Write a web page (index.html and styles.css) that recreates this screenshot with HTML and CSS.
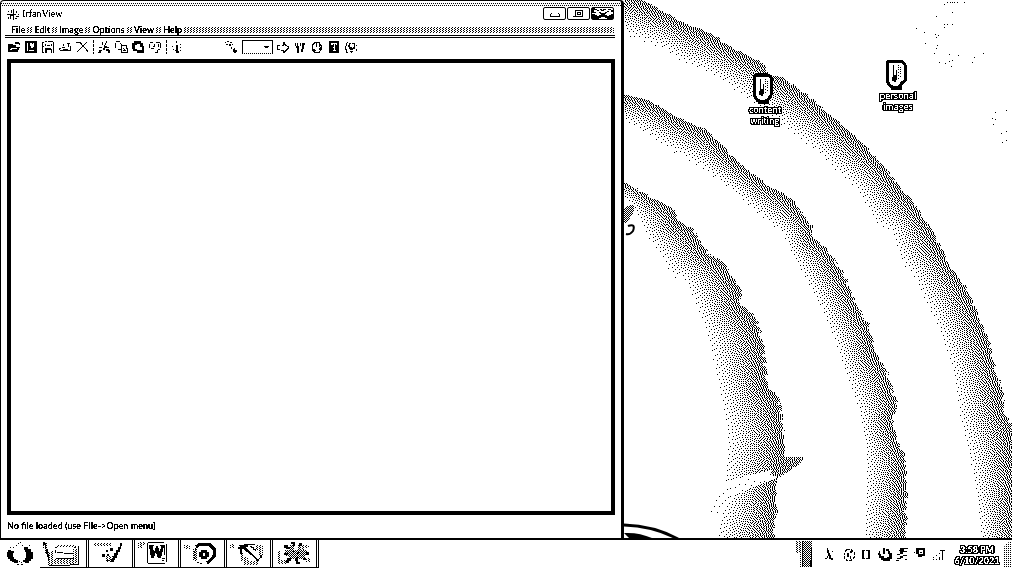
FILE: index.html
```html
<!DOCTYPE html>
<html lang="en">
<head>
<meta charset="utf-8">
<title>IrfanView</title>
<link rel="stylesheet" href="styles.css">
</head>
<body>
<svg class="defs" aria-hidden="true">
  <defs>
    <pattern id="dots" width="3" height="2" patternUnits="userSpaceOnUse"><path d="M0 0h1v1h-1zM2 1h1v1h-1z"/></pattern>
    <pattern id="check" width="2" height="2" patternUnits="userSpaceOnUse"><path d="M0 0h1v1h-1zM1 1h1v1h-1z"/></pattern>
  </defs>
  <filter id="onebit" color-interpolation-filters="sRGB" x="0" y="0" width="100%" height="100%">
    <feComponentTransfer>
      <feFuncR type="discrete" tableValues="0 1"/><feFuncG type="discrete" tableValues="0 1"/><feFuncB type="discrete" tableValues="0 1"/>
      <feFuncA type="discrete" tableValues="0 0 1 1 1"/>
    </feComponentTransfer>
  </filter>
</svg>
<main class="desktop">
  <section class="window" aria-label="IrfanView">
    <header class="titlebar">
      <svg class="app-icon" viewBox="0 0 13 12"><path d="M4 1h1v3h-1zM6 0h1v5h2v1h-2v5h-1v-4h-2v3h-1v-4h-2v-1h5zM1 2h1v1h-1zM0 5h1v1h-1zM1 8h1v2h-1zM9 2h1v2h-1zM9 7h3v1h-3zM11 5h1v1h-1zM8 9h2v1h-2z"/></svg>
      <h1 class="title">IrfanView</h1>
      <div class="controls">
        <button class="control" aria-label="Minimize"><svg viewBox="0 0 21 11"><path fill="none" stroke="#000" d="M6.500 6v2.500h9v-2.500M7 5.500h1M14 5.500h1"/></svg></button>
        <button class="control" aria-label="Restore"><svg viewBox="0 0 21 11"><path fill="none" stroke="#000" d="M7.500 2.500h7v6h-7zM9.500 4.500h3v2h-3zM5 8.500h2"/></svg></button>
        <button class="control" aria-label="Close"><svg viewBox="0 0 21 11"><path d="M0 0h3v1h2v1h-3v2h2v1h-4zM5 2h2v1h-2zM8 1h2v1h1v-1h3v1h-2v1h-3v-1h-1zM16 1h3v1h-3zM15 3h2v1h-2zM7 4h2v1h4v-1h2v1h-1v1h-6v-1h-1zM0 6h3v1h2v1h2v-1h2v-1h4v1h2v1h2v-1h2v-1h2v5h-6v-1h-2v-1h-4v1h-2v1h-7zM19 2h2v2h-2z"/></svg></button>
      </div>
    </header>
    <nav class="menubar">
      <button>File</button><i></i><button>Edit</button><i></i><button>Image</button><i></i><button>Options</button><i></i><button>View</button><i></i><button>Help</button><i class="rest"></i>
    </nav>
    <div class="toolbar">
      <button aria-label="Open"><svg viewBox="0 0 13 13"><path d="M0 3h5v1h3v2h4v1h-1v2h-1v2h-10zM7 1h4v1h1v2h-1v-1h-4zM2 8v1h2v-1h5v-1h-6v1z" fill-rule="evenodd"/></svg></button>
      <button aria-label="Slideshow"><svg viewBox="0 0 13 13"><path d="M0 0h12v12h-12zM2 2v8h1v-8zM5 2v3h1v2h2v-1h1v-4h-1v1h-1v-1zM4 9v1h5v-1z" fill-rule="evenodd"/></svg></button>
      <button aria-label="Save"><svg viewBox="0 0 13 13"><path d="M0 1h2v1h-1v3h1v1h-1v5h1v1h-2zM3 0h2v1h-2zM6 0h5v1h-5zM11 1h1v11h-1zM3 3h1v2h-1zM5 4h3v1h-3zM9 3h1v2h-1zM3 7h6v1h1v4h-1v-3h-4v3h-2z"/></svg></button>
      <button aria-label="Print"><svg viewBox="0 0 13 13"><path d="M4 3h1v2h-1zM8 2h3v1h-1v3h-1v-3h-1zM0 7h2v1h-1v1h3v-1h5v1h2v-4h1v5h-11v-1h-1zM3 6h3v1h-3z"/></svg></button>
      <button aria-label="Delete"><svg viewBox="0 0 13 13"><path fill="none" stroke="#000" d="M0 1.500h4l8 9M11 1l-4 4l-6 6"/></svg></button>
      <span class="sep"></span>
      <button aria-label="Cut"><svg viewBox="0 0 13 13"><path d="M4 1h1v3h-1zM8 0h1v2h-1v2h-1v1h2v1h2v1h-4v2h-2v-2h1v-3h1v-2h1zM1 6h3v1h-3zM1 9h3v1h-1v2h-3v-1h1zM8 8h3v1h1v3h-2v-2h-2z"/></svg></button>
      <button aria-label="Copy"><svg viewBox="0 0 13 13"><path fill="none" stroke="#000" d="M1 .5h4M.5 2v5M3 8.500h3M5 2l3 3M6.500 4v8M8 4.500h3l1 3v4h-6M8 7l3 3M8 9.500h3"/></svg></button>
      <button aria-label="Paste"><svg viewBox="0 0 13 13"><path fill-rule="evenodd" d="M2 0h7v2h2v3h1v7h-7v-2h-4v-2h-1v-6h2zM5 3v1h-2v4h2v1h5v-3h-2v-3z"/></svg></button>
      <button aria-label="Undo"><svg viewBox="0 0 13 13"><path fill="none" stroke="#000" d="M1 1.500h3M.5 3v4M2 7.500h3M5.500 3v3M7 1.500h4M11.500 2v5M11 8.500h-2M8 9v3M6 11.500h2M4 5h2M9.500 3v3"/></svg></button>
      <span class="sep"></span>
      <button aria-label="Information"><svg viewBox="0 0 13 13"><path d="M5 0h1v2h-1zM5 4h2v6h1v2h-3v-2h-1v-1h1zM1 5h1v1h-1zM2 8h1v1h-1zM9 3h1v1h-1zM9 6h1v1h-1zM9 9h1v1h-1z"/></svg></button>
      <span class="gap"></span>
      <button aria-label="Zoom"><svg viewBox="0 0 13 13"><path d="M0 1h1v1h-1zM2 0h2v1h-2zM5 1h2v1h-2zM1 3h2v1h-2zM4 3h2v2h-2zM7 3h1v1h-1zM6 6h1v2h-1zM8 8h1v-1h1v2h2v2h-1v1h-2v-1h-1z"/></svg></button>
      <label class="zoom"><select aria-label="Zoom percent"><option></option></select><svg viewBox="0 0 5 3"><path d="M0 0h5v1h-1v1h-3v-1h-1z"/></svg></label>
      <button aria-label="Next"><svg viewBox="0 0 13 13"><path d="M0 4h3v1h-2v3h2v1h-3zM4 4h2v-3h2v2h1v1h1v1h2v3h-1v1h-1v1h-1v1h-1v1h-2v-2h-2v-1h3v1h1v-1h1v-1h1v-1h1v-1h-1v-1h-2v-1h-1v1h-2z"/></svg></button>
      <button aria-label="Tools"><svg viewBox="0 0 13 13"><path d="M1 2h1v3h1v-3h1v3h1v7h-2v-5h-1v-2h-1zM6 2h1v3h-1zM8 2h3v2h-1v4h-1v3h-2v-3h1z"/></svg></button>
      <button aria-label="Rotate"><svg viewBox="0 0 13 13"><path fill="none" stroke="#000" d="M4 1.500h4l2 3v4l-2 3h-4l-3-3v-4zM5.500 1v5M2 8l3 2M8 9l2-3M8.500 3v3"/></svg></button>
      <button aria-label="Settings"><svg viewBox="0 0 13 13"><path fill-rule="evenodd" d="M1 0h10v12h-10zM3 2v2h2v-1h1v3h-1v1h1v2h-1v1h3v-1h-1v-6h1v1h1v-2z"/></svg></button>
      <button aria-label="About"><svg viewBox="0 0 13 13"><path d="M2 1h1v1h-1v3h-1v3h1v3h1v1h-2v-3h-1v-4h1v-3h1zM4 2h2v1h-1v3h2v1h1v-1h1v-3h-2v-1h3v6h-2v1h-3v-1h-1v-2h-1zM5 10h3v1h-1v1h-1v-1h-1zM11 4h1v1h-1zM11 8h1v2h-1z"/></svg></button>
    </div>
    <div class="viewer"></div>
    <footer class="status">No file loaded (use File-&gt;Open menu)</footer>
  </section>
  <section class="wallpaper" aria-label="Desktop">
    <canvas id="rings"></canvas>
    <a class="shortcut content" href="#content"><svg viewBox="0 0 29 31"><path class="rim" d="M3 3l3-1h11l3 2v18l-3 5l-5 2l-6-2l-3-5z"/><path d="M9 6h1v10h2v-5h1v10h-1v2h-2v-1h-2v-4h1zM14 6h1v1h-1zM16 8h1v1h-1zM14 8h1v1h-1zM16 10h1v1h-1zM14 10h1v1h-1zM16 12h1v1h-1zM14 13h1v1h-1zM16 14h1v1h-1zM14 16h1v1h-1zM16 17h1v1h-1zM14 19h1v1h-1zM7 27h11v4h-11z"/></svg><span>content<br>writing</span></a>
    <a class="shortcut personal" href="#personal"><svg viewBox="0 0 29 31"><path class="rim" d="M3 3l3-1l13 1l2 3v10l1 5l-4 3l-3 4l-4 1l-5-2l-3-5z"/><path d="M9 6h1v10h2v-5h1v10h-1v2h-2v-1h-2v-4h1zM14 6h1v1h-1zM16 8h1v1h-1zM14 8h1v1h-1zM16 10h1v1h-1zM14 10h1v1h-1zM16 12h1v1h-1zM14 13h1v1h-1zM16 14h1v1h-1zM14 16h1v1h-1zM16 17h1v1h-1zM14 19h1v1h-1zM7 27h11v4h-11z"/></svg><span>personal<br>images</span></a>
  </section>
</main>
<footer class="taskbar">
  <button class="start" aria-label="Start"><svg viewBox="0 0 28 24"><path d="M2 8h3v1h3v2h-1v4h1v2h2v1h2v3h-4v-1h-2v-1h-2v-2h-2v-2h-1v-5h1zM18 5h4v2h3v3h2v7h-2v2h-2v2h-4v-1h-2v-2h2v-2h1v-6h-1v-2h-1zM12 1h1v1h-1zM14 0h1v1h-1zM10 3h1v1h-1zM16 3h1v1h-1zM4 5h1v1h-1zM7 5h1v1h-1zM23 3h1v1h-1zM13 19h1v1h-1zM15 20h1v1h-1zM11 22h2v1h-2zM15 22h2v1h-2z"/></svg></button>
  <button class="task folder" aria-label="Explorer"><svg viewBox="0 0 38 26"><path fill="url(#dots)" d="M0 2h5v9h2v14h-3v-12h-3zM13 4h20v2h-20zM7 10h3v14h-3zM10 18h22v5h-22zM30 8h4v14h-4z"/><path d="M0 1h2v1h1v6h-1v-4h-2zM3 8h2v5h1v6h-1v-3h-1v-4h-1zM35 5h1v19h-9v-1h8zM7 24h20v1h-20zM12 9h1v3h-1zM14 11h6v1h-6zM21 12h9v1h-9zM13 17h18v1h-18zM31 6h2v1h-2zM12 6h2v1h-2z"/></svg></button>
  <button class="task" aria-label="Paint"><svg viewBox="0 0 38 26"><path fill="url(#dots)" d="M1 2h18v3h-18zM14 15h8v6h-8z"/><path d="M28 2h2v3h-1v3h-1v3h-2v3h-1v3h-2v2h-1v2h-3v-3h2v-3h1v-3h2v-3h2v-3h2zM18 7h3v3h-3zM14 9h2v2h-2zM10 13h3v3h-3zM15 13h2v2h-2zM14 19h3v1h-3z"/></svg></button>
  <button class="task" aria-label="Word"><svg viewBox="0 0 38 26"><path fill="url(#dots)" d="M0 1h7v3h-3v3h-4z"/><path fill="none" stroke="#000" d="M9.500 2v20M10 1.500h16M28.500 3v18M10 22.500h17"/><path d="M12 4h4v1h-1l1 7l2-7h2l2 7l1-7h-1v-1h5v1h-1l-3 12h-3l-2-6l-2 6h-3l-2-12h-1zM24 17h3v1h-3zM24 19h2v1h-2zM26 5h1v9h-1z"/></svg></button>
  <button class="task" aria-label="Media"><svg viewBox="0 0 38 26"><path fill="url(#dots)" d="M0 4h6v4h-6zM9 7h4v13h-4z"/><path fill="none" stroke="#000" stroke-width="3" d="M12 6l4-3h9l5 5v7l-3 4l-4 3"/><path fill="none" stroke="#000" stroke-dasharray="2 1" d="M13 5l-3 6v6l3 4l6 2"/><path fill-rule="evenodd" d="M17 9h6v2h2v5h-2v2h-6v-2h-2v-5h2zM19 12v3h2v-3z"/></svg></button>
  <button class="task" aria-label="Browser"><svg viewBox="0 0 38 26"><path fill="url(#dots)" d="M0 3h5v4h-5zM10 12h3v4h5v4h10v4h-14v-4h-4zM26 4h7v11h-4v-6h-3z"/><path d="M9 4h5v-1h11v1h-7v2h-3v2h-3v5h-2v-5h-2v-2h2zM14 6h1l13 12h-2l-14-11zM30 14h2v3h-3v3h-3v-2h4zM20 5h2v1h2v2h2v2h-1v-1h-2v-2h-2v-1h-1z"/></svg></button>
  <button class="task" aria-label="IrfanView"><svg viewBox="0 0 38 26"><path fill="url(#dots)" d="M2 10h3v9h5v4h-8zM24 4h9v3h-4v2h-3zM30 17h4v4h-4z"/><path fill="url(#check)" d="M9 9h22v5h-2v4h-16v-3h-4zM14 4h4v5h-4zM22 4h3v5h-3z"/><path d="M15 1h4v4h-2v-2h-2zM8 4h4v2h2v2h-4v-1h-2zM23 2h3v3h-3zM8 12h4v2h-4zM30 11h3v3h-4v-1h1zM11 17h4v3h-2v2h-3v-3h1zM20 16h2v5h2v2h-4v-3h-1zM27 17h3v2h-3zM17 9h1v2h-1zM21 11h2v2h-2z"/></svg></button>
  <div class="tray">
    <svg class="fade" viewBox="0 0 19 27"><path fill="url(#dots)" d="M1 1h8v26h-3v-14h-5z"/><path fill="url(#check)" d="M8 1h10v26h-10z"/><path d="M17 7h1v20h-1zM16 20h1v7h-1z"/></svg>
    <button aria-label="Pointer"><svg viewBox="0 0 14 15"><path d="M3 1h1v2h1v3h1v2h1v3h2v2h-2v-1h-2v-3h-1v-3h-1zM3 9h1v2h-1zM1 11h2v1h-2zM8 4h1v1h-1z"/></svg></button>
    <button aria-label="Sync"><svg viewBox="0 0 14 15"><path fill="none" stroke="#000" stroke-dasharray="3 1" d="M5 2.500h4l3 3v5l-3 3h-4l-3-3v-5z"/><path d="M5 6h2v4h-2zM8 4h2v2h-2zM8 9h1v3h-1z"/></svg></button>
    <button aria-label="Display"><svg viewBox="0 0 14 15"><path fill-rule="evenodd" d="M2 3h3v1h-1v7h1v1h-3zM6 3h4v9h-4v-1h2v-7h-2z"/></svg></button>
    <button aria-label="Update"><svg viewBox="0 0 14 15"><path d="M1 4h1v3h1v2h3v2h3v-1h2v-3h-1v-3h2v2h2v6h-2v2h-7v-1h-2v-2h-2v-3h-1zM5 1h2v6h-2zM8 2h3v2h-3z"/></svg></button>
    <button aria-label="Devices"><svg viewBox="0 0 14 15"><path d="M4 1h8v1h-4v2h3v1h-4v2h-3v-3h-1v-1h1zM1 7h3v1h-3zM7 8h4v1h-4v2h-2v1h-4v-1h3v-2h3zM9 12h2v1h-2zM0 13h3v1h-3z"/></svg></button>
    <button aria-label="Network"><svg viewBox="0 0 14 15"><path fill-rule="evenodd" d="M2 1h9v8h-3v1h-4v-3h-2zM5 3v4h4v-4zM0 5h1v1h-1zM6 5h2v1h-2z"/></svg></button>
    <button aria-label="Signal"><svg viewBox="0 0 14 15"><path d="M8 3h5v1h-2v9h-1v-9h-2zM7 6h1v1h-1zM7 10h1v3h-1zM4 8h1v1h-1zM1 10h1v1h-1zM1 12h1v1h-1zM4 12h1v1h-1z"/></svg></button>
    <time class="clock">3:58 PM<br>6/10/2021</time>
    <button class="show" aria-label="Show desktop"></button>
  </div>
</footer>
<script src="rings.js"></script>
</body>
</html>
```

FILE: styles.css
```css
* { box-sizing: border-box; }
body {
  margin: 0;
  height: 100vh;
  display: flex;
  flex-direction: column;
  overflow: hidden;
  background: #fff;
  color: #000;
  font-family: Lato, "Open Sans", sans-serif;
  font-size: 9px;
  font-weight: 700;
  line-height: 12px;
}
button {
  margin: 0;
  padding: 0;
  border: 0;
  background: none;
  color: inherit;
  font: inherit;
}
svg { display: block; shape-rendering: crispEdges; }
.defs { position: absolute; width: 0; height: 0; }

.desktop {
  flex: 1;
  min-height: 0;
  display: grid;
  grid-template-columns: 156fr 97fr;
  border-bottom: 2px solid #000;
}
.window {
  display: flex;
  flex-direction: column;
  border: 1px solid #000;
  border-width: 1px 3px 0 1px;
  border-top-left-radius: 4px;
  border-top-right-radius: 4px;
  min-width: 0;
}
.titlebar {
  display: flex;
  align-items: flex-start;
  height: 24px;
  padding: 6px 7px 0 6px;
  background: conic-gradient(from 0deg at 1px 1px, transparent 75%, #000 0) 4px 2px / 2px 2px repeat-x,
              conic-gradient(from 0deg at 1px 1px, transparent 75%, #000 0) 5px 4px / 2px 2px repeat-x;
}
.app-icon { width: 13px; height: 12px; margin-top: 2px; }
.title {
  flex: 1;
  margin: 0;
  padding-left: 2px;
  font: 400 10px/14px "Liberation Serif", serif;
  filter: url(#onebit);
}
.controls { display: flex; gap: 1px; }
.control { width: 23px; height: 13px; border: 1px solid #000; border-radius: 2px; background: #fff; }
.control svg { width: 21px; height: 11px; }

.menubar {
  display: flex;
  align-items: center;
  height: 10px;
  margin: 0 6px 0 4px;
  padding-left: 6px;
}
.menubar button { filter: url(#onebit); }
.menubar i {
  width: 9px;
  height: 6px;
  padding: 0 1px;
  background: conic-gradient(from 0deg at 1px 1px, transparent 75%, #000 0) 3px 0 / 3px 2px,
              conic-gradient(from 0deg at 1px 1px, transparent 75%, #000 0) 2px 1px / 3px 2px;
  background-clip: content-box;
}
.menubar .rest { flex: 1; }

.toolbar {
  display: flex;
  align-items: center;
  gap: 4px;
  height: 23px;
  margin: 0 6px 1px 4px;
  padding: 0 0 2px 3px;
  border-top: 3px double #000;
}
.toolbar button { width: 13px; }
.toolbar svg { width: 13px; height: 13px; }
.sep { width: 1px; height: 14px; background: repeating-linear-gradient(#000 0 3px, transparent 3px 4px); }
.gap { width: 33px; }
.zoom {
  display: flex;
  align-items: center;
  width: 31px;
  height: 14px;
  padding-right: 3px;
  border: 1px solid #000;
  border-bottom-style: dotted;
}
.zoom select { flex: 1; min-width: 0; height: 10px; padding: 0; border: 0; appearance: none; background: #fff; }
.toolbar .zoom svg { width: 5px; height: 3px; }
.viewer { flex: 1; margin: 0 6px; border: 4px solid #000; background: #fff; }
.status { height: 23px; padding: 5px 6px; filter: url(#onebit); }

.wallpaper { position: relative; overflow: hidden; min-width: 0; }
.wallpaper canvas { display: block; }
.shortcut {
  position: absolute;
  display: flex;
  flex-direction: column;
  align-items: center;
  width: 48px;
  font-family: "Open Sans", sans-serif;
  font-weight: 400;
  color: #fff;
  text-align: center;
  text-decoration: none;
  text-shadow: 1px 0 #000, -1px 0 #000, 0 1px #000, 0 -1px #000, 1px 1px #000, -1px -1px #000, 1px -1px #000, -1px 1px #000;
  filter: url(#onebit);
}
.shortcut svg { width: 29px; height: 31px; }
.rim { fill: #fff; stroke: #000; stroke-width: 3px; stroke-linejoin: round; }
.shortcut span { line-height: 11px; }
.content { left: 117px; top: 73px; }
.personal { left: 250px; top: 59px; }

.taskbar { display: flex; height: 29px; padding-bottom: 1px; }
.start { width: 40px; padding: 2px 6px; }
.start svg { width: 28px; height: 24px; }
.task { width: 46px; padding: 1px 3px; border: 0 solid #000; border-bottom-width: 1px; border-right: 3px double #000; }
.task svg { width: 38px; height: 26px; }
.folder { width: 49px; }
.tray { display: flex; align-items: flex-start; margin-left: auto; }
.fade { width: 19px; height: 27px; margin-right: 11px; }
.tray button { padding-top: 7px; width: 18px; }
.tray button svg { width: 14px; height: 15px; }
.clock {
  width: 48px;
  margin: 3px 3px 0;
  padding: 1px;
  font-size: 9px;
  line-height: 11px;
  text-align: center;
  white-space: nowrap;
  color: #fff;
  text-shadow: 1px 0 #000, -1px 0 #000, 0 1px #000, 0 -1px #000, 1px 1px #000, -1px -1px #000, 1px -1px #000, -1px 1px #000;
  filter: url(#onebit);
}
.tray .show {
  width: 8px;
  height: 25px;
  margin-top: 2px;
  border-top-left-radius: 6px;
  background: conic-gradient(from 0deg at 1px 1px, transparent 75%, #000 0) 0 0 / 2px 2px;
}
```

FILE: rings.js
```js
// Desktop wallpaper: shaded rings rendered as one-bit error diffusion.
const rings = [
  {
    outer: [[600,-20],[643,0],[683,22],[710,33],[733,48],[763,63],[767,73],[782,77],[807,95],[833,117],[860,140],[880,163],[900,187],[917,207],[933,233],[947,260],[959,277],[966,290],[977,313],[988,340],[992,360],[1000,383],[1005,413],[1011,423],[1013,440],[1016,560]],
    inner: [[600,30],[625,37],[660,50],[677,63],[710,77],[740,97],[787,133],[813,153],[833,173],[853,190],[873,227],[888,233],[897,263],[910,277],[915,290],[933,327],[947,367],[955,420],[963,453],[970,487],[975,527],[978,560]]
  },
  {
    outer: [[600,88],[628,95],[650,100],[673,115],[707,130],[733,157],[763,182],[790,198],[812,227],[813,238],[827,248],[845,278],[850,290],[860,313],[868,323],[873,350],[887,373],[897,405],[892,420],[897,443],[904,453],[906,487],[905,560]],
    inner: [[600,120],[625,125],[643,135],[663,148],[700,170],[733,195],[760,220],[780,235],[787,253],[800,278],[817,310],[830,340],[843,380],[855,413],[861,447],[860,493],[858,560]]
  },
  {
    outer: [[600,178],[628,183],[650,197],[672,207],[677,220],[692,228],[707,253],[723,262],[733,278],[740,290],[740,303],[756,317],[763,347],[767,387],[778,397],[783,427],[784,457],[783,470],[777,480],[777,493],[775,520],[770,560]],
    inner: [[600,198],[627,203],[633,213],[643,237],[657,257],[667,277],[682,282],[688,300],[700,327],[708,363],[717,403],[721,440],[719,470],[718,507],[712,520],[710,560]]
  }
];
const tip = [[776,457],[804,456],[800,463],[779,477],[770,474]];
const glare = [[712,487],[745,476],[780,467],[776,478],[750,488],[731,498],[718,512],[700,516]];
const specks = [[944,4],[947,2],[950,2],[952,2],[954,2],[957,2],[964,2],[952,12],[936,16],[944,24],[947,24],[952,24],[944,27],[916,28],[924,32],[935,34],[938,35],[936,37],[925,43],[937,45],[936,48],[934,53],[949,54],[958,55],[983,53],[974,57],[939,62],[945,63],[949,61],[952,60],[972,62],[951,66],[1006,110],[995,112],[992,118],[995,119],[993,124],[1006,131],[1001,133],[1006,140],[1002,142]];

function inside(x, y, poly) {
  let hit = false;
  for (let i = 0, j = poly.length - 1; i < poly.length; j = i++) {
    const [ax, ay] = poly[i], [bx, by] = poly[j];
    if ((ay > y) !== (by > y) && x < (bx - ax) * (y - ay) / (by - ay) + ax) hit = !hit;
  }
  return hit;
}
function distance(x, y, line) {
  let best = 1e9;
  for (let i = 1; i < line.length; i++) {
    const [ax, ay] = line[i - 1], dx = line[i][0] - ax, dy = line[i][1] - ay;
    const t = Math.max(0, Math.min(1, ((x - ax) * dx + (y - ay) * dy) / (dx * dx + dy * dy)));
    best = Math.min(best, (x - ax - t * dx) ** 2 + (y - ay - t * dy) ** 2);
  }
  return Math.sqrt(best);
}
// Small repeatable wobble that frays the ring edges in short blocks.
function wobble(x, y) {
  const s = Math.sin(Math.floor(x / 4) * 12.9898 + Math.floor(y / 3) * 78.233) * 43758.5453;
  return (s - Math.floor(s) - 0.5) * 4;
}
function tone(x, y, shapes) {
  if (inside(x, y, tip)) return 0.45;
  if (inside(x, y, glare)) return 0.03;
  const fx = x + wobble(x, y);
  for (const s of shapes) {
    if (inside(fx, y, s.area)) {
      const o = distance(x, y, s.outer), i = distance(x, y, s.inner);
      return 0.5 * Math.pow(i / (i + o + 0.01), 1.1);
    }
  }
  return 0;
}
function paint() {
  const canvas = document.getElementById("rings");
  const w = canvas.width = canvas.parentElement.clientWidth;
  const h = canvas.height = canvas.parentElement.clientHeight;
  const ctx = canvas.getContext("2d");
  const image = ctx.createImageData(w, h);
  const shapes = rings.map(r => ({ ...r, area: r.outer.concat([...r.inner].reverse()) }));
  let row = new Float32Array(w + 2), next = new Float32Array(w + 2);
  for (let y = 0; y < h; y++) {
    for (let x = 0; x < w; x++) {
      const base = tone(x + 624, y, shapes);
      const value = base + (base > 0 ? row[x + 1] : 0);
      const dot = value >= 0.5 ? 1 : 0, err = value - dot;
      row[x + 2] += err * 7 / 16;
      next[x] += err * 3 / 16;
      next[x + 1] += err * 5 / 16;
      next[x + 2] += err / 16;
      const p = (y * w + x) * 4;
      image.data[p] = image.data[p + 1] = image.data[p + 2] = dot ? 0 : 255;
      image.data[p + 3] = 255;
    }
    row = next;
    next = new Float32Array(w + 2);
  }
  ctx.putImageData(image, 0, 0);
  for (const [x, y] of specks) ctx.fillRect(x - 624, y, 1, 1);

  // dark curves at the foot of the wallpaper and the figure behind the window edge
  ctx.lineWidth = 3;
  ctx.beginPath();
  ctx.moveTo(0, 525);
  ctx.quadraticCurveTo(30, 526, 54, 539);
  ctx.stroke();
  ctx.beginPath();
  ctx.moveTo(0, 533);
  ctx.quadraticCurveTo(16, 532, 30, 539);
  ctx.lineTo(6, 539);
  ctx.fill();
  ctx.clearRect(0, 204, 11, 34);
  for (let y = 205; y < 223; y++)
    for (let x = 0; x < 10; x++)
      if ((x + y) % 2 && x < 10 - Math.max(0, y - 210) * 0.6 && x > 8 - (y - 203) * 2) ctx.fillRect(x, y, 1, 1);
  ctx.lineWidth = 2;
  ctx.beginPath();
  ctx.moveTo(4, 226);
  ctx.quadraticCurveTo(12, 223, 9, 231);
  ctx.quadraticCurveTo(6, 235, 2, 234);
  ctx.stroke();
}
paint();
addEventListener("resize", paint);
```
